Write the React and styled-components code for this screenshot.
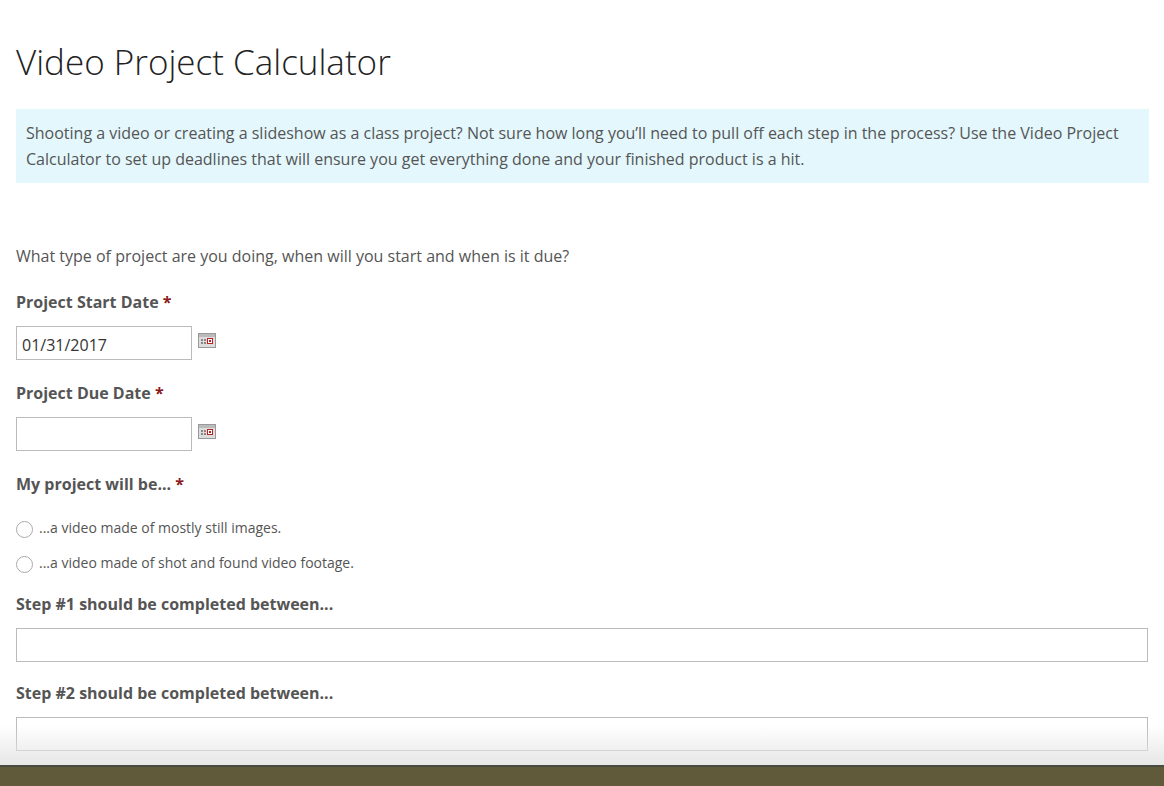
import React from 'react';
import styled, { createGlobalStyle } from 'styled-components';

const GlobalStyle = createGlobalStyle`
  html, body { margin: 0; padding: 0; background: #fff; }
  body { font-family: "Open Sans", "Liberation Sans", sans-serif; color: #555; overflow: hidden; }
`;

const Page = styled.div`
  height: 786px;
  display: flex;
  flex-direction: column;
  overflow: hidden;
`;

const Main = styled.main`
  flex: 1;
  padding: 0 16px 0 16px;
  overflow: hidden;
  position: relative;
`;

const Fade = styled.div`
  position: absolute;
  left: 0; right: 0; bottom: 0;
  height: 40px;
  background: linear-gradient(to bottom, rgba(236,236,236,0), rgba(228,228,228,0.9));
  pointer-events: none;
`;

const Title = styled.h1`
  font-weight: 300;
  font-size: 35px;
  color: #222;
  margin: 39px 0 24px;
  line-height: 46px;
`;

const Notice = styled.div`
  background: #e3f7fd;
  padding: 11px 10px;
  font-size: 16px;
  line-height: 26px;
  color: #555;
  margin-right: -1px;
`;

const Intro = styled.p`
  font-size: 16px;
  margin: 62px 0 24px;
  line-height: 22px;
`;

const Label = styled.div`
  font-weight: 700;
  font-size: 16px;
  color: #555;
  line-height: 22px;
  margin-bottom: 13px;
`;

const Req = styled.span`
  color: #8b1a1a;
`;

const DateRow = styled.div`
  display: flex;
  align-items: flex-start;
  gap: 6px;
  margin-bottom: 22px;
`;

const Input = styled.input`
  box-sizing: border-box;
  width: ${p => (p.$full ? '100%' : '176px')};
  height: 34px;
  border: 1px solid #bbb;
  padding: 4px 5px 0;
  font-family: "Open Sans", "Liberation Sans", sans-serif;
  font-size: 16px;
  color: #333;
  margin-bottom: ${p => (p.$full ? '20px' : '0')};
  background: #fff;
`;

const CalIcon = () => (
  <svg width="18" height="15" viewBox="0 0 18 15" style={{ marginTop: 7 }}>
    <rect x="0.5" y="0.5" width="17" height="14" fill="#ddd" stroke="#999" />
    <rect x="1" y="1" width="16" height="3" fill="#bbb" />
    <g fill="#888">
      <rect x="3" y="6" width="2" height="2" /><rect x="6" y="6" width="2" height="2" />
      <rect x="3" y="9" width="2" height="2" /><rect x="6" y="9" width="2" height="2" />
    </g>
    <rect x="9.5" y="5.5" width="5" height="5" fill="#fff" stroke="#b22" />
    <rect x="11" y="7" width="2" height="2" fill="#b22" />
  </svg>
);

const Radios = styled.div`
  margin: 22px 0 20px;
  display: flex;
  flex-direction: column;
  gap: 14px;
`;

const RadioRow = styled.label`
  display: flex;
  align-items: center;
  gap: 6px;
  font-size: 14px;
  color: #555;
  line-height: 20px;
`;

const Circle = styled.span`
  width: 15px;
  height: 15px;
  border-radius: 50%;
  border: 1px solid #aaa;
  background: #fff;
  margin-top: 4px;
`;

const Footer = styled.footer`
  height: 19px;
  background: #615a3a;
  border-top: 2px solid #4a4a44;
`;

export default function App() {
  return (
    <Page>
      <GlobalStyle />
      <Main>
        <Title>Video Project Calculator</Title>
        <Notice>
          Shooting a video or creating a slideshow as a class project? Not sure how long you’ll need to pull off each step in the process? Use the Video Project Calculator to set up deadlines that will ensure you get everything done and your finished product is a hit.
        </Notice>
        <Intro>What type of project are you doing, when will you start and when is it due?</Intro>
        <Label>Project Start Date <Req>*</Req></Label>
        <DateRow>
          <Input defaultValue="01/31/2017" />
          <CalIcon />
        </DateRow>
        <Label>Project Due Date <Req>*</Req></Label>
        <DateRow>
          <Input />
          <CalIcon />
        </DateRow>
        <Label>My project will be... <Req>*</Req></Label>
        <Radios>
          <RadioRow><Circle />...a video made of mostly still images.</RadioRow>
          <RadioRow><Circle />...a video made of shot and found video footage.</RadioRow>
        </Radios>
        <Label>Step #1 should be completed between...</Label>
        <Input $full />
        <Label>Step #2 should be completed between...</Label>
        <Input $full />
        <Fade />
      </Main>
      <Footer />
    </Page>
  );
}
